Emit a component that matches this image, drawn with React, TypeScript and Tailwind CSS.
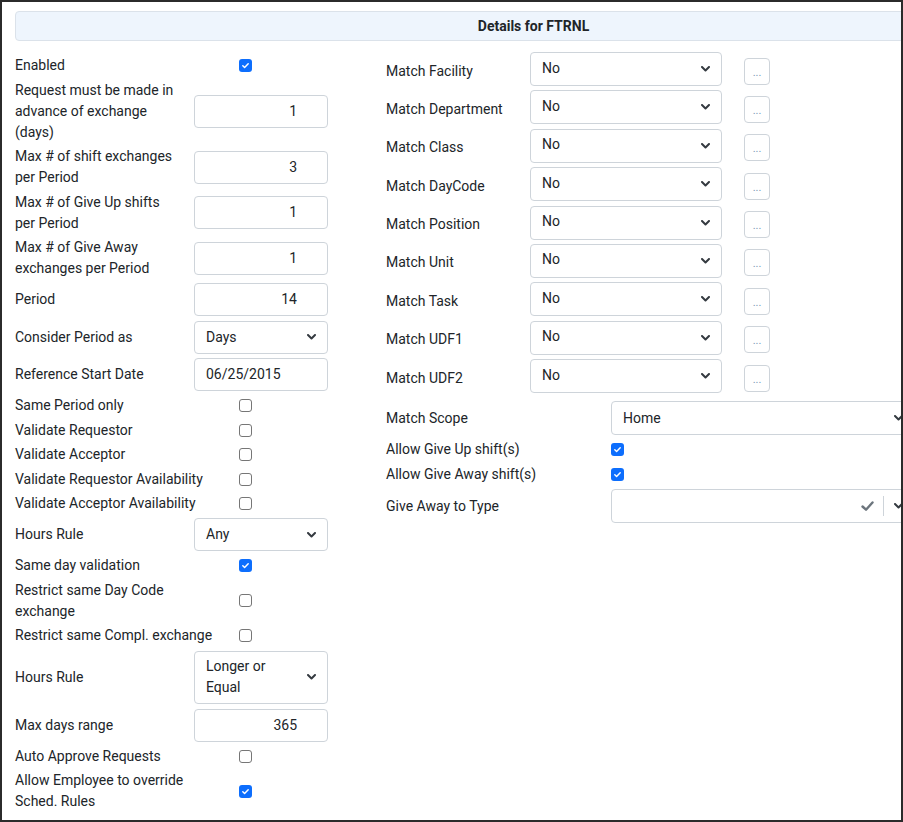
import React from 'react';

type Row =
  | { kind: 'check'; label: string; checked: boolean }
  | { kind: 'number'; label: string; value: string }
  | { kind: 'text'; label: string; value: string }
  | { kind: 'select'; label: string; value: string; tall?: boolean };

const leftRows: Row[] = [
  { kind: 'check', label: 'Enabled', checked: true },
  { kind: 'number', label: 'Request must be made in advance of exchange (days)', value: '1' },
  { kind: 'number', label: 'Max # of shift exchanges per Period', value: '3' },
  { kind: 'number', label: 'Max # of Give Up shifts per Period', value: '1' },
  { kind: 'number', label: 'Max # of Give Away exchanges per Period', value: '1' },
  { kind: 'number', label: 'Period', value: '14' },
  { kind: 'select', label: 'Consider Period as', value: 'Days' },
  { kind: 'text', label: 'Reference Start Date', value: '06/25/2015' },
  { kind: 'check', label: 'Same Period only', checked: false },
  { kind: 'check', label: 'Validate Requestor', checked: false },
  { kind: 'check', label: 'Validate Acceptor', checked: false },
  { kind: 'check', label: 'Validate Requestor Availability', checked: false },
  { kind: 'check', label: 'Validate Acceptor Availability', checked: false },
  { kind: 'select', label: 'Hours Rule', value: 'Any' },
  { kind: 'check', label: 'Same day validation', checked: true },
  { kind: 'check', label: 'Restrict same Day Code exchange', checked: false },
  { kind: 'check', label: 'Restrict same Compl. exchange', checked: false },
  { kind: 'select', label: 'Hours Rule', value: 'Longer or Equal', tall: true },
  { kind: 'number', label: 'Max days range', value: '365' },
  { kind: 'check', label: 'Auto Approve Requests', checked: false },
  { kind: 'check', label: 'Allow Employee to override Sched. Rules', checked: true },
];

const matchFields = ['Facility', 'Department', 'Class', 'DayCode', 'Position', 'Unit', 'Task', 'UDF1', 'UDF2'];

function Chevron() {
  return (
    <svg width="9" height="6" viewBox="0 0 9 6" className="shrink-0">
      <path d="M1 1l3.5 3.5L8 1" stroke="#343a40" strokeWidth="2" fill="none" strokeLinecap="round" strokeLinejoin="round" />
    </svg>
  );
}

function Check({ checked }: { checked: boolean }) {
  if (!checked) {
    return <span className="block w-[13px] h-[13px] rounded-[3px] border border-[#767676] bg-white" />;
  }
  return (
    <span className="flex w-[13px] h-[13px] rounded-[3px] bg-[#0d6efd] items-center justify-center">
      <svg width="9" height="9" viewBox="0 0 20 20">
        <path d="M4 10.5l4 4 8-8.5" stroke="white" strokeWidth="3.2" fill="none" strokeLinecap="round" strokeLinejoin="round" />
      </svg>
    </span>
  );
}

function LeftRow({ row }: { row: Row }) {
  if (row.kind === 'check') {
    return (
      <div className="flex items-center">
        <div className="w-[224px] pr-[14px] leading-[21px]">{row.label}</div>
        <Check checked={row.checked} />
      </div>
    );
  }
  return (
    <div className={`flex items-center ${row.kind === 'select' && row.tall ? 'min-h-[55px]' : 'min-h-[34px]'}`}>
      <div className="w-[179px] pr-[16px] leading-[21px]">{row.label}</div>
      {row.kind === 'number' && (
        <div className="w-[134px] h-[33px] border border-[#ced4da] rounded bg-white flex items-center justify-end pr-[30px]">
          {row.value}
        </div>
      )}
      {row.kind === 'text' && (
        <div className="w-[134px] h-[33px] border border-[#ced4da] rounded bg-white flex items-center pl-[11px]">
          {row.value}
        </div>
      )}
      {row.kind === 'select' && (
        <div
          className={`w-[134px] ${row.tall ? 'h-[53px]' : 'h-[33px]'} border border-[#ced4da] rounded bg-white flex items-center pl-[11px] pr-[11px] justify-between`}
        >
          <span className="w-[80px] leading-[21px]">{row.value}</span>
          <Chevron />
        </div>
      )}
    </div>
  );
}

export default function App() {
  return (
    <div className="w-[903px] h-[822px] border-2 border-[#2b2b2b] overflow-hidden bg-white text-[14px] text-[#212529] font-[Roboto,Arial,sans-serif]">
      <div className="w-[1060px] pl-[13px] pt-[9px]">
        <div className="w-[1037px] h-[30px] border border-[#dbe2ea] rounded bg-[#eef5fd] flex items-center justify-center font-bold">
          Details for FTRNL
        </div>

        <div className="flex items-start">
          <div className="w-[371px] pt-[14px] flex flex-col gap-[3.5px]">
            {leftRows.map((row, i) => (
              <LeftRow key={i} row={row} />
            ))}
          </div>

          <div className="pt-[11px] flex flex-col">
            <div className="flex flex-col gap-[4.4px]">
              {matchFields.map((f) => (
                <div key={f} className="flex items-center h-[34px]">
                  <div className="w-[144px] pt-[4px]">Match {f}</div>
                  <div className="w-[192px] h-[34px] border border-[#ced4da] rounded bg-white flex items-center justify-between pl-[11px] pr-[11px]">
                    <span className="-mt-[2px]">No</span>
                    <Chevron />
                  </div>
                  <div className="ml-[22px] mt-[4px] w-[26px] h-[27px] border border-[#ced4da] rounded bg-white flex items-center justify-center text-[11px] text-[#7d95b5] leading-none pt-[2px]">
                    ...
                  </div>
                </div>
              ))}
            </div>

            <div className="mt-[8px] flex flex-col gap-[4px]">
              <div className="flex items-center h-[34px]">
                <div className="w-[225px] pt-[1px]">Match Scope</div>
                <div className="w-[307px] h-[34px] border border-[#ced4da] rounded bg-white flex items-center justify-between pl-[11px] pr-[14px]">
                  <span>Home</span>
                  <Chevron />
                </div>
              </div>
              <div className="flex items-center">
                <div className="w-[225px] leading-[21px]">Allow Give Up shift(s)</div>
                <Check checked />
              </div>
              <div className="flex items-center">
                <div className="w-[225px] leading-[21px]">Allow Give Away shift(s)</div>
                <Check checked />
              </div>
              <div className="flex items-center h-[34px]">
                <div className="w-[225px] pt-[1px]">Give Away to Type</div>
                <div className="w-[307px] h-[34px] border border-[#ced4da] rounded bg-white flex items-center justify-end pr-[14px]">
                  <svg width="13" height="10" viewBox="0 0 13 10">
                    <path d="M1.5 5.5l3.5 3.2L11.5 1.5" stroke="#6c757d" strokeWidth="2.4" fill="none" strokeLinecap="round" strokeLinejoin="round" />
                  </svg>
                  <span className="ml-[9px] mr-[10px] w-px h-[20px] bg-[#ced4da]" />
                  <Chevron />
                </div>
              </div>
            </div>
          </div>
        </div>
      </div>
    </div>
  );
}
